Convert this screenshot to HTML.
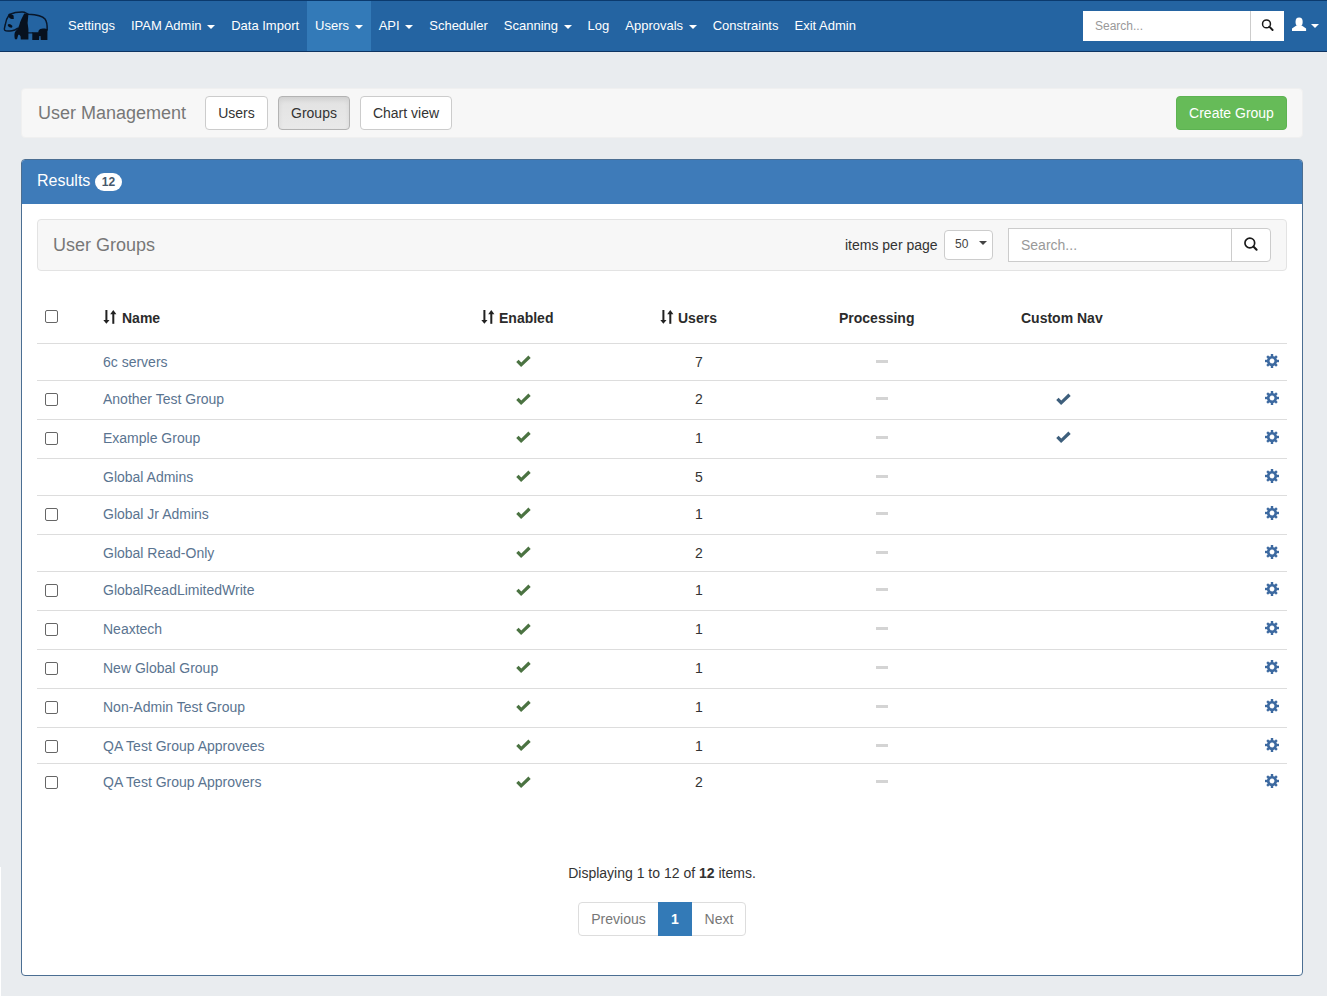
<!DOCTYPE html>
<html><head><meta charset="utf-8"><title>User Groups</title>
<style>
*{box-sizing:border-box}
html,body{margin:0;padding:0}
body{width:1327px;height:996px;overflow:hidden;position:relative;background:#e9ecef;font-family:"Liberation Sans",sans-serif;font-size:14px;color:#333}
.abs{position:absolute}
/* navbar */
#nav{left:0;top:0;width:1327px;height:52px;background:#2464a2;border-top:1px solid #0b3a6e;border-bottom:1px solid #0e3462}
#nav ul{position:absolute;left:60px;top:0;margin:0;padding:0;list-style:none;white-space:nowrap;font-size:0}
#nav li{display:inline-block;font-size:13px;color:#fff;line-height:50px;height:50px;padding:0 8px}
#nav li.active{background:#337ab8}
.caret{display:inline-block;width:0;height:0;margin-left:2px;vertical-align:middle;border-top:4px solid;border-right:4px solid transparent;border-left:4px solid transparent}
#nsearch{left:1083px;top:10px;width:167px;height:30px;background:#fff;font-size:12px;color:#999;padding:0 0 0 12px;line-height:30px}
#nbtn{left:1250px;top:10px;width:34px;height:30px;background:#fff;border-left:1px solid #ccc}
/* top panel */
#top{left:21px;top:88px;width:1282px;height:50px;background:#f7f7f7;border:1px solid #f0f0f0;border-radius:4px}
#top .title{position:absolute;left:16px;top:0;line-height:48px;font-size:18px;color:#777}
.btn{position:absolute;display:block;height:34px;border:1px solid #ccc;border-radius:4px;background:#fff;font-size:14px;line-height:32px;text-align:center;color:#333}
.btn.active{background:linear-gradient(#e2e2e2,#e9e9e9);border-color:#b3b3b3;box-shadow:inset 0 3px 5px rgba(0,0,0,.08)}
.btn.green{background:#66bb58;border-color:#5db352;color:#fff}
/* results panel */
#res{left:21px;top:159px;width:1282px;height:817px;background:#fff;border:1px solid #4b6e92;border-radius:4px;overflow:hidden}
#res .hd{position:absolute;left:0;top:0;width:100%;height:44px;background:#3e7bb9;color:#fff;font-size:16px;line-height:42px;padding-left:15px}
.badge{display:inline-block;position:relative;top:0px;height:18px;min-width:27px;padding:0 7px;border-radius:9px;background:#fff;color:#46586b;font-size:12px;font-weight:bold;line-height:18px;vertical-align:middle;text-align:center;margin-left:0px}
#inner{left:15px;top:59px;width:1250px;height:52px;background:#f7f7f7;border:1px solid #e3e3e3;border-radius:4px}
#inner .title{position:absolute;left:15px;top:0;line-height:50px;font-size:18px;color:#777}
#ipp{position:absolute;left:807px;top:0;line-height:50px;font-size:14px;color:#333}
#sel{position:absolute;left:906px;top:10px;width:49px;height:30px;background:#fff;border:1px solid #ccc;border-radius:4px;font-size:12px;line-height:26px;padding-left:10px;color:#444}
#sel .caret{position:absolute;left:34px;top:10px;margin:0;border-top-color:#444}
#isearch{position:absolute;left:970px;top:8px;width:224px;height:34px;background:#fff;border:1px solid #ccc;font-size:14px;color:#999;line-height:32px;padding-left:12px}
#ibtn{position:absolute;left:1193px;top:8px;width:40px;height:34px;background:#fff;border:1px solid #ccc;border-radius:0 4px 4px 0}
/* table */
.line{position:absolute;left:16px;width:1250px;height:1px;background:#ddd}
.cb{position:absolute;left:23px;width:13px;height:13px;border:1px solid #666;border-radius:2px;background:#fff}
.cell{position:absolute;line-height:20px;white-space:nowrap}
.name{left:81px;color:#5a7490}
.num{color:#333;width:20px;text-align:center;left:667px}
.th{font-weight:bold;color:#2b2b2b}
.dash{position:absolute;left:854px;width:12px;height:3px;background:#d4d4d4}
svg{display:block}
#foot{position:absolute;left:0;width:100%;text-align:center;font-size:14px;color:#333;line-height:20px}
#pag{left:556px;top:742px;width:168px;height:34px;border:1px solid #ddd;border-radius:4px;font-size:14px;color:#777}
#pag span{position:absolute;top:0;line-height:32px;text-align:center}
</style></head>
<body>
<div id="nav" class="abs">
  <svg class="abs" style="left:0;top:-1px" width="56" height="52" viewBox="0 0 56 52">
    <g fill="none" stroke="#08172b" stroke-width="1.5" stroke-linecap="round">
      <path d="M9.2 14.5 C13 13 17 12 22.5 12.1 C25 12.2 26.5 13.5 28.5 14.2 C36 14.6 42 15.5 45 19 C47 21.5 47.3 25 47.2 30"/>
      <path d="M8.8 15.5 C6.8 18 5.6 22 5.2 25 C4.6 27 3.8 29 4.8 30.3 C6 31.5 9 31.2 12 30.8 C14 30.5 16 29.5 17.5 28.3"/>
      <path d="M28.4 32.8 L32.6 32.8" stroke-width="1.3"/>
    </g>
    <g fill="#07111f">
      <path d="M8.6 14 C10.5 13.6 12.2 14.4 13.6 15.4 L13.8 19 C12 19.4 10.2 18.6 9.2 17.8 Z"/>
      <ellipse cx="10.1" cy="25.9" rx="2.5" ry="1.5" transform="rotate(25 10.1 25.9)"/>
      <path d="M24.2 13.6 L28.4 14.2 L27.6 23 L28.4 29 L28.4 39.6 L20.8 39.6 L20.6 36.5 C20 35 19 34.6 18.2 35 L17 39.3 L15 39.3 C14.4 37.5 14.2 34.5 14.8 32.5 C15.8 30.8 17 29.5 17.8 28.8 C19 26 19.7 24 20 22.5 C21.5 19 23 16 24.2 13.6 Z"/>
      <path d="M32.3 32.2 L38.4 32.2 L38.4 31 C39.5 29 41 28.5 43 28.4 C45 28.3 46.6 28.6 47.4 29.5 L47.4 40 L40.8 40 L40.5 36 L39.3 36 L39 40 L32.3 40 Z"/>
    </g>
  </svg>
  <ul>
    <li>Settings</li><li>IPAM Admin <span class="caret"></span></li><li>Data Import</li><li class="active">Users <span class="caret"></span></li><li>API <span class="caret"></span></li><li>Scheduler</li><li>Scanning <span class="caret"></span></li><li>Log</li><li>Approvals <span class="caret"></span></li><li>Constraints</li><li>Exit Admin</li>
  </ul>
  <div id="nsearch" class="abs">Search...</div>
  <div id="nbtn" class="abs">
    <svg class="abs" style="left:8px;top:6px" width="16" height="16" viewBox="0 0 16 16"><circle cx="7.5" cy="6.9" r="3.95" fill="none" stroke="#1a1a1a" stroke-width="1.5"/><path d="M10.3 9.7 L13.6 13" stroke="#1a1a1a" stroke-width="1.9" stroke-linecap="round"/></svg>
  </div>
  <svg class="abs" style="left:1290px;top:14px" width="18" height="18" viewBox="0 0 18 18"><g fill="#fff"><ellipse cx="9.1" cy="6.9" rx="3.6" ry="4.3"/><path d="M6.4 10.6 L11.8 10.6 L16.1 13.6 L16.1 16 L2 16 L2 13.6 Z"/></g></svg>
  <span class="caret abs" style="left:1311px;top:23px;color:#fff;margin:0;border-top-width:4.5px"></span>
</div>

<div id="top" class="abs">
  <div class="title">User Management</div>
  <div class="btn" style="left:183px;top:7px;width:63px">Users</div>
  <div class="btn active" style="left:256px;top:7px;width:72px">Groups</div>
  <div class="btn" style="left:338px;top:7px;width:92px">Chart view</div>
  <div class="btn green" style="left:1154px;top:7px;width:111px">Create Group</div>
</div>

<div id="res" class="abs">
  <div class="hd">Results <span class="badge">12</span></div>
  <div id="inner" class="abs">
    <div class="title">User Groups</div>
    <div id="ipp">items per page</div>
    <div id="sel">50<span class="caret"></span></div>
    <div id="isearch">Search...</div>
    <div id="ibtn"><svg class="abs" style="left:12px;top:8px" width="16" height="16" viewBox="0 0 16 16"><circle cx="5.8" cy="6.0" r="4.85" fill="none" stroke="#1a1a1a" stroke-width="1.7"/><path d="M9.4 9.5 L12.6 12.7" stroke="#1a1a1a" stroke-width="2.1" stroke-linecap="round"/></svg></div>
  </div>
  <div id="tbl">
<div class="cb" style="top:150px"></div>
<svg class="abs" style="left:81px;top:150px" width="14" height="14" viewBox="0 0 14 14"><g fill="#222"><rect x="2.4" y="0" width="2" height="10.5"/><path d="M0.3 10 H6.5 L3.4 13.8 Z"/><rect x="9.3" y="3.5" width="2" height="10.3"/><path d="M7.2 4.2 H13.4 L10.3 0 Z"/></g></svg>
<div class="cell th" style="left:100px;top:148px">Name</div>
<svg class="abs" style="left:459px;top:150px" width="14" height="14" viewBox="0 0 14 14"><g fill="#222"><rect x="2.4" y="0" width="2" height="10.5"/><path d="M0.3 10 H6.5 L3.4 13.8 Z"/><rect x="9.3" y="3.5" width="2" height="10.3"/><path d="M7.2 4.2 H13.4 L10.3 0 Z"/></g></svg>
<div class="cell th" style="left:477px;top:148px">Enabled</div>
<svg class="abs" style="left:638px;top:150px" width="14" height="14" viewBox="0 0 14 14"><g fill="#222"><rect x="2.4" y="0" width="2" height="10.5"/><path d="M0.3 10 H6.5 L3.4 13.8 Z"/><rect x="9.3" y="3.5" width="2" height="10.3"/><path d="M7.2 4.2 H13.4 L10.3 0 Z"/></g></svg>
<div class="cell th" style="left:656px;top:148px">Users</div>
<div class="cell th" style="left:817px;top:148px">Processing</div>
<div class="cell th" style="left:999px;top:148px">Custom Nav</div>
<div class="line" style="left:15px;top:183px"></div>
<div class="cell name" style="top:192px">6c servers</div>
<svg class="abs" style="left:494px;top:195px" width="15" height="12" viewBox="0 0 15 12"><path fill="#4b7342" d="M0.2 7 L2.6 4.8 L5.3 7.5 L12.4 0.6 L14.7 3 L5.1 12 Z"/></svg>
<div class="cell num" style="top:192px">7</div>
<div class="dash" style="top:200px"></div>
<svg class="abs" style="left:1243px;top:194px" width="14" height="14" viewBox="0 0 14 14"><g fill="#3c69a0"><path fill-rule="evenodd" d="M7 1.9 A5.1 5.1 0 1 1 6.99 1.9 Z M7 4.6 A2.4 2.4 0 1 0 7.01 4.6 Z"/><g id="t"><rect x="5.8" y="0" width="2.4" height="3"/><rect x="5.8" y="11" width="2.4" height="3"/><rect x="0" y="5.8" width="3" height="2.4"/><rect x="11" y="5.8" width="3" height="2.4"/></g><g transform="rotate(45 7 7)"><rect x="5.8" y="0.1" width="2.4" height="3"/><rect x="5.8" y="10.9" width="2.4" height="3"/><rect x="0.1" y="5.8" width="3" height="2.4"/><rect x="10.9" y="5.8" width="3" height="2.4"/></g></g></svg>
<div class="line" style="left:15px;top:220px"></div>
<div class="cb" style="top:233px"></div>
<div class="cell name" style="top:229px">Another Test Group</div>
<svg class="abs" style="left:494px;top:233px" width="15" height="12" viewBox="0 0 15 12"><path fill="#4b7342" d="M0.2 7 L2.6 4.8 L5.3 7.5 L12.4 0.6 L14.7 3 L5.1 12 Z"/></svg>
<div class="cell num" style="top:229px">2</div>
<div class="dash" style="top:237px"></div>
<svg class="abs" style="left:1034px;top:233px" width="15" height="12" viewBox="0 0 15 12"><path fill="#3e5f7c" d="M0.2 7 L2.6 4.8 L5.3 7.5 L12.4 0.6 L14.7 3 L5.1 12 Z"/></svg>
<svg class="abs" style="left:1243px;top:231px" width="14" height="14" viewBox="0 0 14 14"><g fill="#3c69a0"><path fill-rule="evenodd" d="M7 1.9 A5.1 5.1 0 1 1 6.99 1.9 Z M7 4.6 A2.4 2.4 0 1 0 7.01 4.6 Z"/><g id="t"><rect x="5.8" y="0" width="2.4" height="3"/><rect x="5.8" y="11" width="2.4" height="3"/><rect x="0" y="5.8" width="3" height="2.4"/><rect x="11" y="5.8" width="3" height="2.4"/></g><g transform="rotate(45 7 7)"><rect x="5.8" y="0.1" width="2.4" height="3"/><rect x="5.8" y="10.9" width="2.4" height="3"/><rect x="0.1" y="5.8" width="3" height="2.4"/><rect x="10.9" y="5.8" width="3" height="2.4"/></g></g></svg>
<div class="line" style="left:15px;top:259px"></div>
<div class="cb" style="top:272px"></div>
<div class="cell name" style="top:268px">Example Group</div>
<svg class="abs" style="left:494px;top:271px" width="15" height="12" viewBox="0 0 15 12"><path fill="#4b7342" d="M0.2 7 L2.6 4.8 L5.3 7.5 L12.4 0.6 L14.7 3 L5.1 12 Z"/></svg>
<div class="cell num" style="top:268px">1</div>
<div class="dash" style="top:276px"></div>
<svg class="abs" style="left:1034px;top:271px" width="15" height="12" viewBox="0 0 15 12"><path fill="#3e5f7c" d="M0.2 7 L2.6 4.8 L5.3 7.5 L12.4 0.6 L14.7 3 L5.1 12 Z"/></svg>
<svg class="abs" style="left:1243px;top:270px" width="14" height="14" viewBox="0 0 14 14"><g fill="#3c69a0"><path fill-rule="evenodd" d="M7 1.9 A5.1 5.1 0 1 1 6.99 1.9 Z M7 4.6 A2.4 2.4 0 1 0 7.01 4.6 Z"/><g id="t"><rect x="5.8" y="0" width="2.4" height="3"/><rect x="5.8" y="11" width="2.4" height="3"/><rect x="0" y="5.8" width="3" height="2.4"/><rect x="11" y="5.8" width="3" height="2.4"/></g><g transform="rotate(45 7 7)"><rect x="5.8" y="0.1" width="2.4" height="3"/><rect x="5.8" y="10.9" width="2.4" height="3"/><rect x="0.1" y="5.8" width="3" height="2.4"/><rect x="10.9" y="5.8" width="3" height="2.4"/></g></g></svg>
<div class="line" style="left:15px;top:298px"></div>
<div class="cell name" style="top:307px">Global Admins</div>
<svg class="abs" style="left:494px;top:310px" width="15" height="12" viewBox="0 0 15 12"><path fill="#4b7342" d="M0.2 7 L2.6 4.8 L5.3 7.5 L12.4 0.6 L14.7 3 L5.1 12 Z"/></svg>
<div class="cell num" style="top:307px">5</div>
<div class="dash" style="top:315px"></div>
<svg class="abs" style="left:1243px;top:309px" width="14" height="14" viewBox="0 0 14 14"><g fill="#3c69a0"><path fill-rule="evenodd" d="M7 1.9 A5.1 5.1 0 1 1 6.99 1.9 Z M7 4.6 A2.4 2.4 0 1 0 7.01 4.6 Z"/><g id="t"><rect x="5.8" y="0" width="2.4" height="3"/><rect x="5.8" y="11" width="2.4" height="3"/><rect x="0" y="5.8" width="3" height="2.4"/><rect x="11" y="5.8" width="3" height="2.4"/></g><g transform="rotate(45 7 7)"><rect x="5.8" y="0.1" width="2.4" height="3"/><rect x="5.8" y="10.9" width="2.4" height="3"/><rect x="0.1" y="5.8" width="3" height="2.4"/><rect x="10.9" y="5.8" width="3" height="2.4"/></g></g></svg>
<div class="line" style="left:15px;top:335px"></div>
<div class="cb" style="top:348px"></div>
<div class="cell name" style="top:344px">Global Jr Admins</div>
<svg class="abs" style="left:494px;top:347px" width="15" height="12" viewBox="0 0 15 12"><path fill="#4b7342" d="M0.2 7 L2.6 4.8 L5.3 7.5 L12.4 0.6 L14.7 3 L5.1 12 Z"/></svg>
<div class="cell num" style="top:344px">1</div>
<div class="dash" style="top:352px"></div>
<svg class="abs" style="left:1243px;top:346px" width="14" height="14" viewBox="0 0 14 14"><g fill="#3c69a0"><path fill-rule="evenodd" d="M7 1.9 A5.1 5.1 0 1 1 6.99 1.9 Z M7 4.6 A2.4 2.4 0 1 0 7.01 4.6 Z"/><g id="t"><rect x="5.8" y="0" width="2.4" height="3"/><rect x="5.8" y="11" width="2.4" height="3"/><rect x="0" y="5.8" width="3" height="2.4"/><rect x="11" y="5.8" width="3" height="2.4"/></g><g transform="rotate(45 7 7)"><rect x="5.8" y="0.1" width="2.4" height="3"/><rect x="5.8" y="10.9" width="2.4" height="3"/><rect x="0.1" y="5.8" width="3" height="2.4"/><rect x="10.9" y="5.8" width="3" height="2.4"/></g></g></svg>
<div class="line" style="left:15px;top:374px"></div>
<div class="cell name" style="top:383px">Global Read-Only</div>
<svg class="abs" style="left:494px;top:386px" width="15" height="12" viewBox="0 0 15 12"><path fill="#4b7342" d="M0.2 7 L2.6 4.8 L5.3 7.5 L12.4 0.6 L14.7 3 L5.1 12 Z"/></svg>
<div class="cell num" style="top:383px">2</div>
<div class="dash" style="top:391px"></div>
<svg class="abs" style="left:1243px;top:385px" width="14" height="14" viewBox="0 0 14 14"><g fill="#3c69a0"><path fill-rule="evenodd" d="M7 1.9 A5.1 5.1 0 1 1 6.99 1.9 Z M7 4.6 A2.4 2.4 0 1 0 7.01 4.6 Z"/><g id="t"><rect x="5.8" y="0" width="2.4" height="3"/><rect x="5.8" y="11" width="2.4" height="3"/><rect x="0" y="5.8" width="3" height="2.4"/><rect x="11" y="5.8" width="3" height="2.4"/></g><g transform="rotate(45 7 7)"><rect x="5.8" y="0.1" width="2.4" height="3"/><rect x="5.8" y="10.9" width="2.4" height="3"/><rect x="0.1" y="5.8" width="3" height="2.4"/><rect x="10.9" y="5.8" width="3" height="2.4"/></g></g></svg>
<div class="line" style="left:15px;top:411px"></div>
<div class="cb" style="top:424px"></div>
<div class="cell name" style="top:420px">GlobalReadLimitedWrite</div>
<svg class="abs" style="left:494px;top:424px" width="15" height="12" viewBox="0 0 15 12"><path fill="#4b7342" d="M0.2 7 L2.6 4.8 L5.3 7.5 L12.4 0.6 L14.7 3 L5.1 12 Z"/></svg>
<div class="cell num" style="top:420px">1</div>
<div class="dash" style="top:428px"></div>
<svg class="abs" style="left:1243px;top:422px" width="14" height="14" viewBox="0 0 14 14"><g fill="#3c69a0"><path fill-rule="evenodd" d="M7 1.9 A5.1 5.1 0 1 1 6.99 1.9 Z M7 4.6 A2.4 2.4 0 1 0 7.01 4.6 Z"/><g id="t"><rect x="5.8" y="0" width="2.4" height="3"/><rect x="5.8" y="11" width="2.4" height="3"/><rect x="0" y="5.8" width="3" height="2.4"/><rect x="11" y="5.8" width="3" height="2.4"/></g><g transform="rotate(45 7 7)"><rect x="5.8" y="0.1" width="2.4" height="3"/><rect x="5.8" y="10.9" width="2.4" height="3"/><rect x="0.1" y="5.8" width="3" height="2.4"/><rect x="10.9" y="5.8" width="3" height="2.4"/></g></g></svg>
<div class="line" style="left:15px;top:450px"></div>
<div class="cb" style="top:463px"></div>
<div class="cell name" style="top:459px">Neaxtech</div>
<svg class="abs" style="left:494px;top:463px" width="15" height="12" viewBox="0 0 15 12"><path fill="#4b7342" d="M0.2 7 L2.6 4.8 L5.3 7.5 L12.4 0.6 L14.7 3 L5.1 12 Z"/></svg>
<div class="cell num" style="top:459px">1</div>
<div class="dash" style="top:467px"></div>
<svg class="abs" style="left:1243px;top:461px" width="14" height="14" viewBox="0 0 14 14"><g fill="#3c69a0"><path fill-rule="evenodd" d="M7 1.9 A5.1 5.1 0 1 1 6.99 1.9 Z M7 4.6 A2.4 2.4 0 1 0 7.01 4.6 Z"/><g id="t"><rect x="5.8" y="0" width="2.4" height="3"/><rect x="5.8" y="11" width="2.4" height="3"/><rect x="0" y="5.8" width="3" height="2.4"/><rect x="11" y="5.8" width="3" height="2.4"/></g><g transform="rotate(45 7 7)"><rect x="5.8" y="0.1" width="2.4" height="3"/><rect x="5.8" y="10.9" width="2.4" height="3"/><rect x="0.1" y="5.8" width="3" height="2.4"/><rect x="10.9" y="5.8" width="3" height="2.4"/></g></g></svg>
<div class="line" style="left:15px;top:489px"></div>
<div class="cb" style="top:502px"></div>
<div class="cell name" style="top:498px">New Global Group</div>
<svg class="abs" style="left:494px;top:501px" width="15" height="12" viewBox="0 0 15 12"><path fill="#4b7342" d="M0.2 7 L2.6 4.8 L5.3 7.5 L12.4 0.6 L14.7 3 L5.1 12 Z"/></svg>
<div class="cell num" style="top:498px">1</div>
<div class="dash" style="top:506px"></div>
<svg class="abs" style="left:1243px;top:500px" width="14" height="14" viewBox="0 0 14 14"><g fill="#3c69a0"><path fill-rule="evenodd" d="M7 1.9 A5.1 5.1 0 1 1 6.99 1.9 Z M7 4.6 A2.4 2.4 0 1 0 7.01 4.6 Z"/><g id="t"><rect x="5.8" y="0" width="2.4" height="3"/><rect x="5.8" y="11" width="2.4" height="3"/><rect x="0" y="5.8" width="3" height="2.4"/><rect x="11" y="5.8" width="3" height="2.4"/></g><g transform="rotate(45 7 7)"><rect x="5.8" y="0.1" width="2.4" height="3"/><rect x="5.8" y="10.9" width="2.4" height="3"/><rect x="0.1" y="5.8" width="3" height="2.4"/><rect x="10.9" y="5.8" width="3" height="2.4"/></g></g></svg>
<div class="line" style="left:15px;top:528px"></div>
<div class="cb" style="top:541px"></div>
<div class="cell name" style="top:537px">Non-Admin Test Group</div>
<svg class="abs" style="left:494px;top:540px" width="15" height="12" viewBox="0 0 15 12"><path fill="#4b7342" d="M0.2 7 L2.6 4.8 L5.3 7.5 L12.4 0.6 L14.7 3 L5.1 12 Z"/></svg>
<div class="cell num" style="top:537px">1</div>
<div class="dash" style="top:545px"></div>
<svg class="abs" style="left:1243px;top:539px" width="14" height="14" viewBox="0 0 14 14"><g fill="#3c69a0"><path fill-rule="evenodd" d="M7 1.9 A5.1 5.1 0 1 1 6.99 1.9 Z M7 4.6 A2.4 2.4 0 1 0 7.01 4.6 Z"/><g id="t"><rect x="5.8" y="0" width="2.4" height="3"/><rect x="5.8" y="11" width="2.4" height="3"/><rect x="0" y="5.8" width="3" height="2.4"/><rect x="11" y="5.8" width="3" height="2.4"/></g><g transform="rotate(45 7 7)"><rect x="5.8" y="0.1" width="2.4" height="3"/><rect x="5.8" y="10.9" width="2.4" height="3"/><rect x="0.1" y="5.8" width="3" height="2.4"/><rect x="10.9" y="5.8" width="3" height="2.4"/></g></g></svg>
<div class="line" style="left:15px;top:567px"></div>
<div class="cb" style="top:580px"></div>
<div class="cell name" style="top:576px">QA Test Group Approvees</div>
<svg class="abs" style="left:494px;top:579px" width="15" height="12" viewBox="0 0 15 12"><path fill="#4b7342" d="M0.2 7 L2.6 4.8 L5.3 7.5 L12.4 0.6 L14.7 3 L5.1 12 Z"/></svg>
<div class="cell num" style="top:576px">1</div>
<div class="dash" style="top:584px"></div>
<svg class="abs" style="left:1243px;top:578px" width="14" height="14" viewBox="0 0 14 14"><g fill="#3c69a0"><path fill-rule="evenodd" d="M7 1.9 A5.1 5.1 0 1 1 6.99 1.9 Z M7 4.6 A2.4 2.4 0 1 0 7.01 4.6 Z"/><g id="t"><rect x="5.8" y="0" width="2.4" height="3"/><rect x="5.8" y="11" width="2.4" height="3"/><rect x="0" y="5.8" width="3" height="2.4"/><rect x="11" y="5.8" width="3" height="2.4"/></g><g transform="rotate(45 7 7)"><rect x="5.8" y="0.1" width="2.4" height="3"/><rect x="5.8" y="10.9" width="2.4" height="3"/><rect x="0.1" y="5.8" width="3" height="2.4"/><rect x="10.9" y="5.8" width="3" height="2.4"/></g></g></svg>
<div class="line" style="left:15px;top:603px"></div>
<div class="cb" style="top:616px"></div>
<div class="cell name" style="top:612px">QA Test Group Approvers</div>
<svg class="abs" style="left:494px;top:616px" width="15" height="12" viewBox="0 0 15 12"><path fill="#4b7342" d="M0.2 7 L2.6 4.8 L5.3 7.5 L12.4 0.6 L14.7 3 L5.1 12 Z"/></svg>
<div class="cell num" style="top:612px">2</div>
<div class="dash" style="top:620px"></div>
<svg class="abs" style="left:1243px;top:614px" width="14" height="14" viewBox="0 0 14 14"><g fill="#3c69a0"><path fill-rule="evenodd" d="M7 1.9 A5.1 5.1 0 1 1 6.99 1.9 Z M7 4.6 A2.4 2.4 0 1 0 7.01 4.6 Z"/><g id="t"><rect x="5.8" y="0" width="2.4" height="3"/><rect x="5.8" y="11" width="2.4" height="3"/><rect x="0" y="5.8" width="3" height="2.4"/><rect x="11" y="5.8" width="3" height="2.4"/></g><g transform="rotate(45 7 7)"><rect x="5.8" y="0.1" width="2.4" height="3"/><rect x="5.8" y="10.9" width="2.4" height="3"/><rect x="0.1" y="5.8" width="3" height="2.4"/><rect x="10.9" y="5.8" width="3" height="2.4"/></g></g></svg>
  </div>
  <div id="foot" style="top:703px">Displaying 1 to 12 of <b>12</b> items.</div>
  <div id="pag" class="abs">
    <span style="left:0;width:79px">Previous</span>
    <span style="left:79px;top:-1px;height:34px;line-height:34px;width:34px;background:#337ab7;color:#fff;font-weight:bold">1</span>
    <span style="left:113px;width:54px">Next</span>
  </div>
</div>
<div class="abs" style="left:0;top:867px;width:1px;height:129px;background:#fff"></div>
</body></html>
